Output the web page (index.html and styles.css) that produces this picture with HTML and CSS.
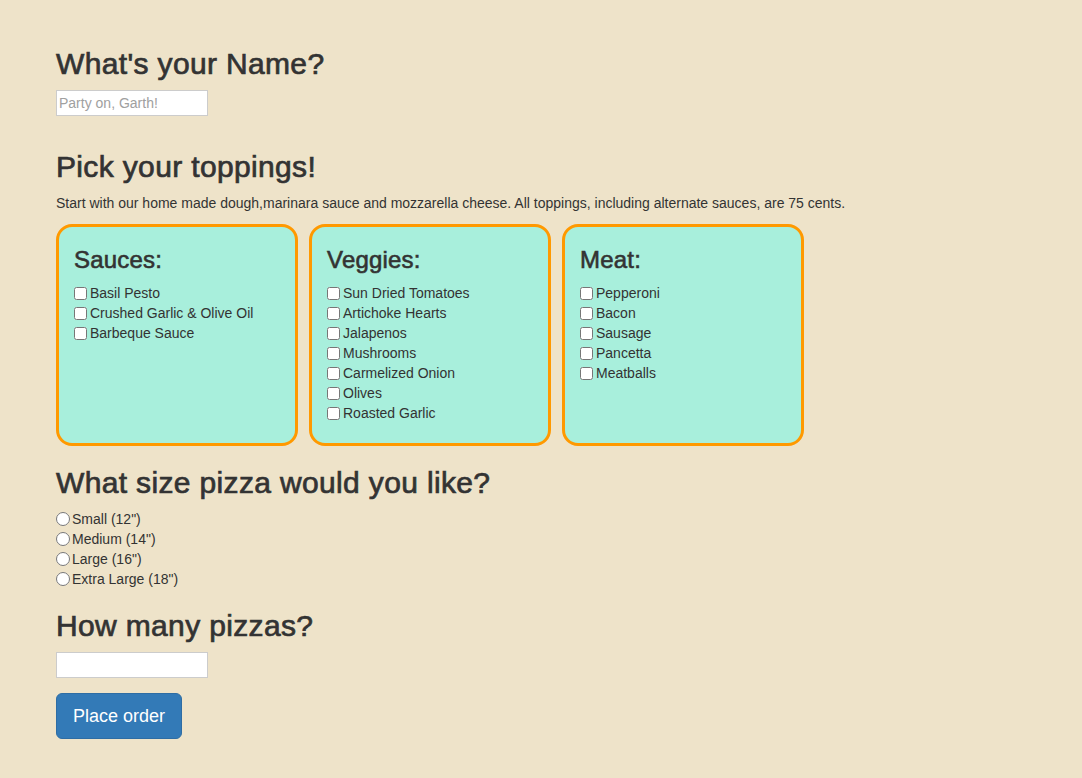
FILE: index.html
```html
<!DOCTYPE html>
<html>
<head>
<meta charset="utf-8">
<link rel="stylesheet" href="styles.css">
</head>
<body>
<div class="page">
  <h2 class="heading">What's your Name?</h2>
  <div class="field-group">
    <input class="text-input" type="text" placeholder="Party on, Garth!">
  </div>

  <h2 class="heading">Pick your toppings!</h2>
  <p class="intro">Start with our home made dough,marinara sauce and mozzarella cheese. All toppings, including alternate sauces, are 75 cents.</p>

  <div class="boxes">
    <div class="box">
      <h3 class="box-title">Sauces:</h3>
      <label class="opt"><input type="checkbox" class="check">Basil Pesto</label>
      <label class="opt"><input type="checkbox" class="check">Crushed Garlic &amp; Olive Oil</label>
      <label class="opt"><input type="checkbox" class="check">Barbeque Sauce</label>
    </div>
    <div class="box">
      <h3 class="box-title">Veggies:</h3>
      <label class="opt"><input type="checkbox" class="check">Sun Dried Tomatoes</label>
      <label class="opt"><input type="checkbox" class="check">Artichoke Hearts</label>
      <label class="opt"><input type="checkbox" class="check">Jalapenos</label>
      <label class="opt"><input type="checkbox" class="check">Mushrooms</label>
      <label class="opt"><input type="checkbox" class="check">Carmelized Onion</label>
      <label class="opt"><input type="checkbox" class="check">Olives</label>
      <label class="opt"><input type="checkbox" class="check">Roasted Garlic</label>
    </div>
    <div class="box">
      <h3 class="box-title">Meat:</h3>
      <label class="opt"><input type="checkbox" class="check">Pepperoni</label>
      <label class="opt"><input type="checkbox" class="check">Bacon</label>
      <label class="opt"><input type="checkbox" class="check">Sausage</label>
      <label class="opt"><input type="checkbox" class="check">Pancetta</label>
      <label class="opt"><input type="checkbox" class="check">Meatballs</label>
    </div>
  </div>

  <h2 class="heading">What size pizza would you like?</h2>
  <div class="radios">
    <label class="opt"><input type="radio" name="size" class="radio">Small (12")</label>
    <label class="opt"><input type="radio" name="size" class="radio">Medium (14")</label>
    <label class="opt"><input type="radio" name="size" class="radio">Large (16")</label>
    <label class="opt"><input type="radio" name="size" class="radio">Extra Large (18")</label>
  </div>

  <h2 class="heading">How many pizzas?</h2>
  <div class="field-group-small">
    <input class="text-input" type="text">
  </div>
  <button class="btn" type="button">Place order</button>
</div>
</body>
</html>
```

FILE: styles.css
```css
html, body {
  margin: 0;
  padding: 0;
}
body {
  background: #eee3c9;
  color: #333333;
  font-family: "Liberation Sans", Arial, sans-serif;
  font-size: 14px;
  line-height: 20px;
}
.page {
  padding: 27px 56px 40px 56px;
}
.heading {
  font-size: 30px;
  font-weight: normal;
  line-height: 33px;
  margin: 20px 0 10px 0;
  letter-spacing: 0.35px;
  -webkit-text-stroke: 0.7px #333333;
}
.field-group {
  margin-bottom: 34px;
}
.field-group-small {
  margin-bottom: 15px;
}
.text-input {
  display: block;
  box-sizing: border-box;
  width: 152px;
  height: 26px;
  margin: 0;
  padding: 2px 2px;
  border: 1px solid #cccccc;
  background: #ffffff;
  font-family: "Liberation Sans", Arial, sans-serif;
  font-size: 14px;
  color: #333;
  outline: none;
}
.text-input::placeholder {
  color: #a0a0a0;
}
.intro {
  margin: 0 0 11px 0;
  font-size: 14px;
  line-height: 20px;
}
.boxes {
  display: flex;
  gap: 11px;
  align-items: stretch;
}
.box {
  box-sizing: border-box;
  width: 242px;
  background: #a8efdc;
  border: 3px solid #ff9900;
  border-radius: 16px;
  padding: 0 15px 20px 15px;
  display: flex;
  flex-direction: column;
}
.box-title {
  font-size: 24px;
  font-weight: normal;
  line-height: 26px;
  margin: 20px 0 10px 0;
  letter-spacing: 0.2px;
  -webkit-text-stroke: 0.6px #333333;
}
.opt {
  display: flex;
  align-items: center;
  height: 20px;
  font-size: 14px;
}
.check {
  width: 13px;
  height: 13px;
  margin: 0 3px 0 0;
}
.radios {
  display: flex;
  flex-direction: column;
}
.radio {
  width: 14px;
  height: 14px;
  margin: 0 2px 0 0;
}
.btn {
  display: block;
  box-sizing: border-box;
  width: 126px;
  height: 46px;
  padding: 10px 12px;
  background: #337ab7;
  border: 1px solid #2e6da4;
  border-radius: 6px;
  color: #ffffff;
  font-family: "Liberation Sans", Arial, sans-serif;
  font-size: 18px;
  line-height: 24px;
  white-space: nowrap;
}
```
